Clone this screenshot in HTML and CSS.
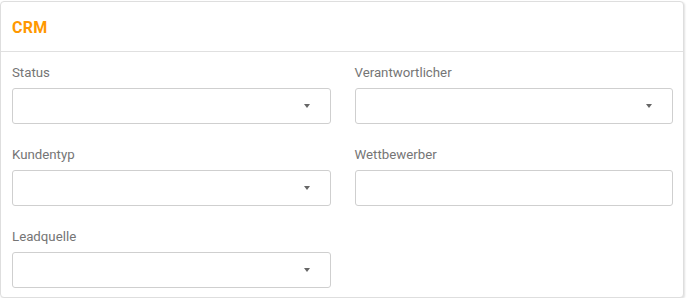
FILE: index.html
```html
<!DOCTYPE html>
<html lang="de">
<head>
    <meta charset="UTF-8">
    <meta name="viewport" content="width=device-width, initial-scale=1.0">
    <title>CRM</title>
    <link rel="stylesheet" href="styles.css">
</head>
<body>
    <div class="card">
        <div class="card-header">CRM</div>
        <div class="card-body">
            <div class="field">
                <label>Status</label>
                <div class="input select"><span class="caret"></span></div>
            </div>
            <div class="field">
                <label>Verantwortlicher</label>
                <div class="input select"><span class="caret"></span></div>
            </div>
            <div class="field">
                <label>Kundentyp</label>
                <div class="input select"><span class="caret"></span></div>
            </div>
            <div class="field">
                <label>Wettbewerber</label>
                <div class="input"></div>
            </div>
            <div class="field">
                <label>Leadquelle</label>
                <div class="input select"><span class="caret"></span></div>
            </div>
        </div>
    </div>
</body>
</html>
```

FILE: styles.css
```css
body {
    margin: 0;
    padding: 0;
    font-family: Roboto, "Liberation Sans", sans-serif;
    background: #fff;
}

.card {
    width: 684px;
    margin-top: 1px;
    border: 1px solid #dedede;
    border-radius: 4px;
    box-shadow: 1px 1px 2px rgba(0, 0, 0, 0.12);
    background: #fff;
    box-sizing: border-box;
}

.card-header {
    height: 50px;
    padding: 1px 11px 0;
    display: flex;
    align-items: center;
    font-size: 16px;
    font-weight: bold;
    letter-spacing: 0.3px;
    color: #ff9800;
    border-bottom: 1px solid #e0e0e0;
    box-sizing: border-box;
}

.card-body {
    display: grid;
    grid-template-columns: 1fr 1fr;
    column-gap: 24px;
    row-gap: 23px;
    padding: 13px 10px 9px 11px;
}

.field label {
    display: block;
    font-size: 13.25px;
    line-height: 16px;
    color: #757575;
    margin-bottom: 7px;
}

.input {
    position: relative;
    height: 36px;
    border: 1px solid #cfcfcf;
    border-radius: 3px;
    box-sizing: border-box;
    background: #fff;
}

.caret {
    position: absolute;
    right: 20px;
    top: 15px;
    width: 0;
    height: 0;
    border-left: 3.5px solid transparent;
    border-right: 3.5px solid transparent;
    border-top: 4px solid #666;
}
```
